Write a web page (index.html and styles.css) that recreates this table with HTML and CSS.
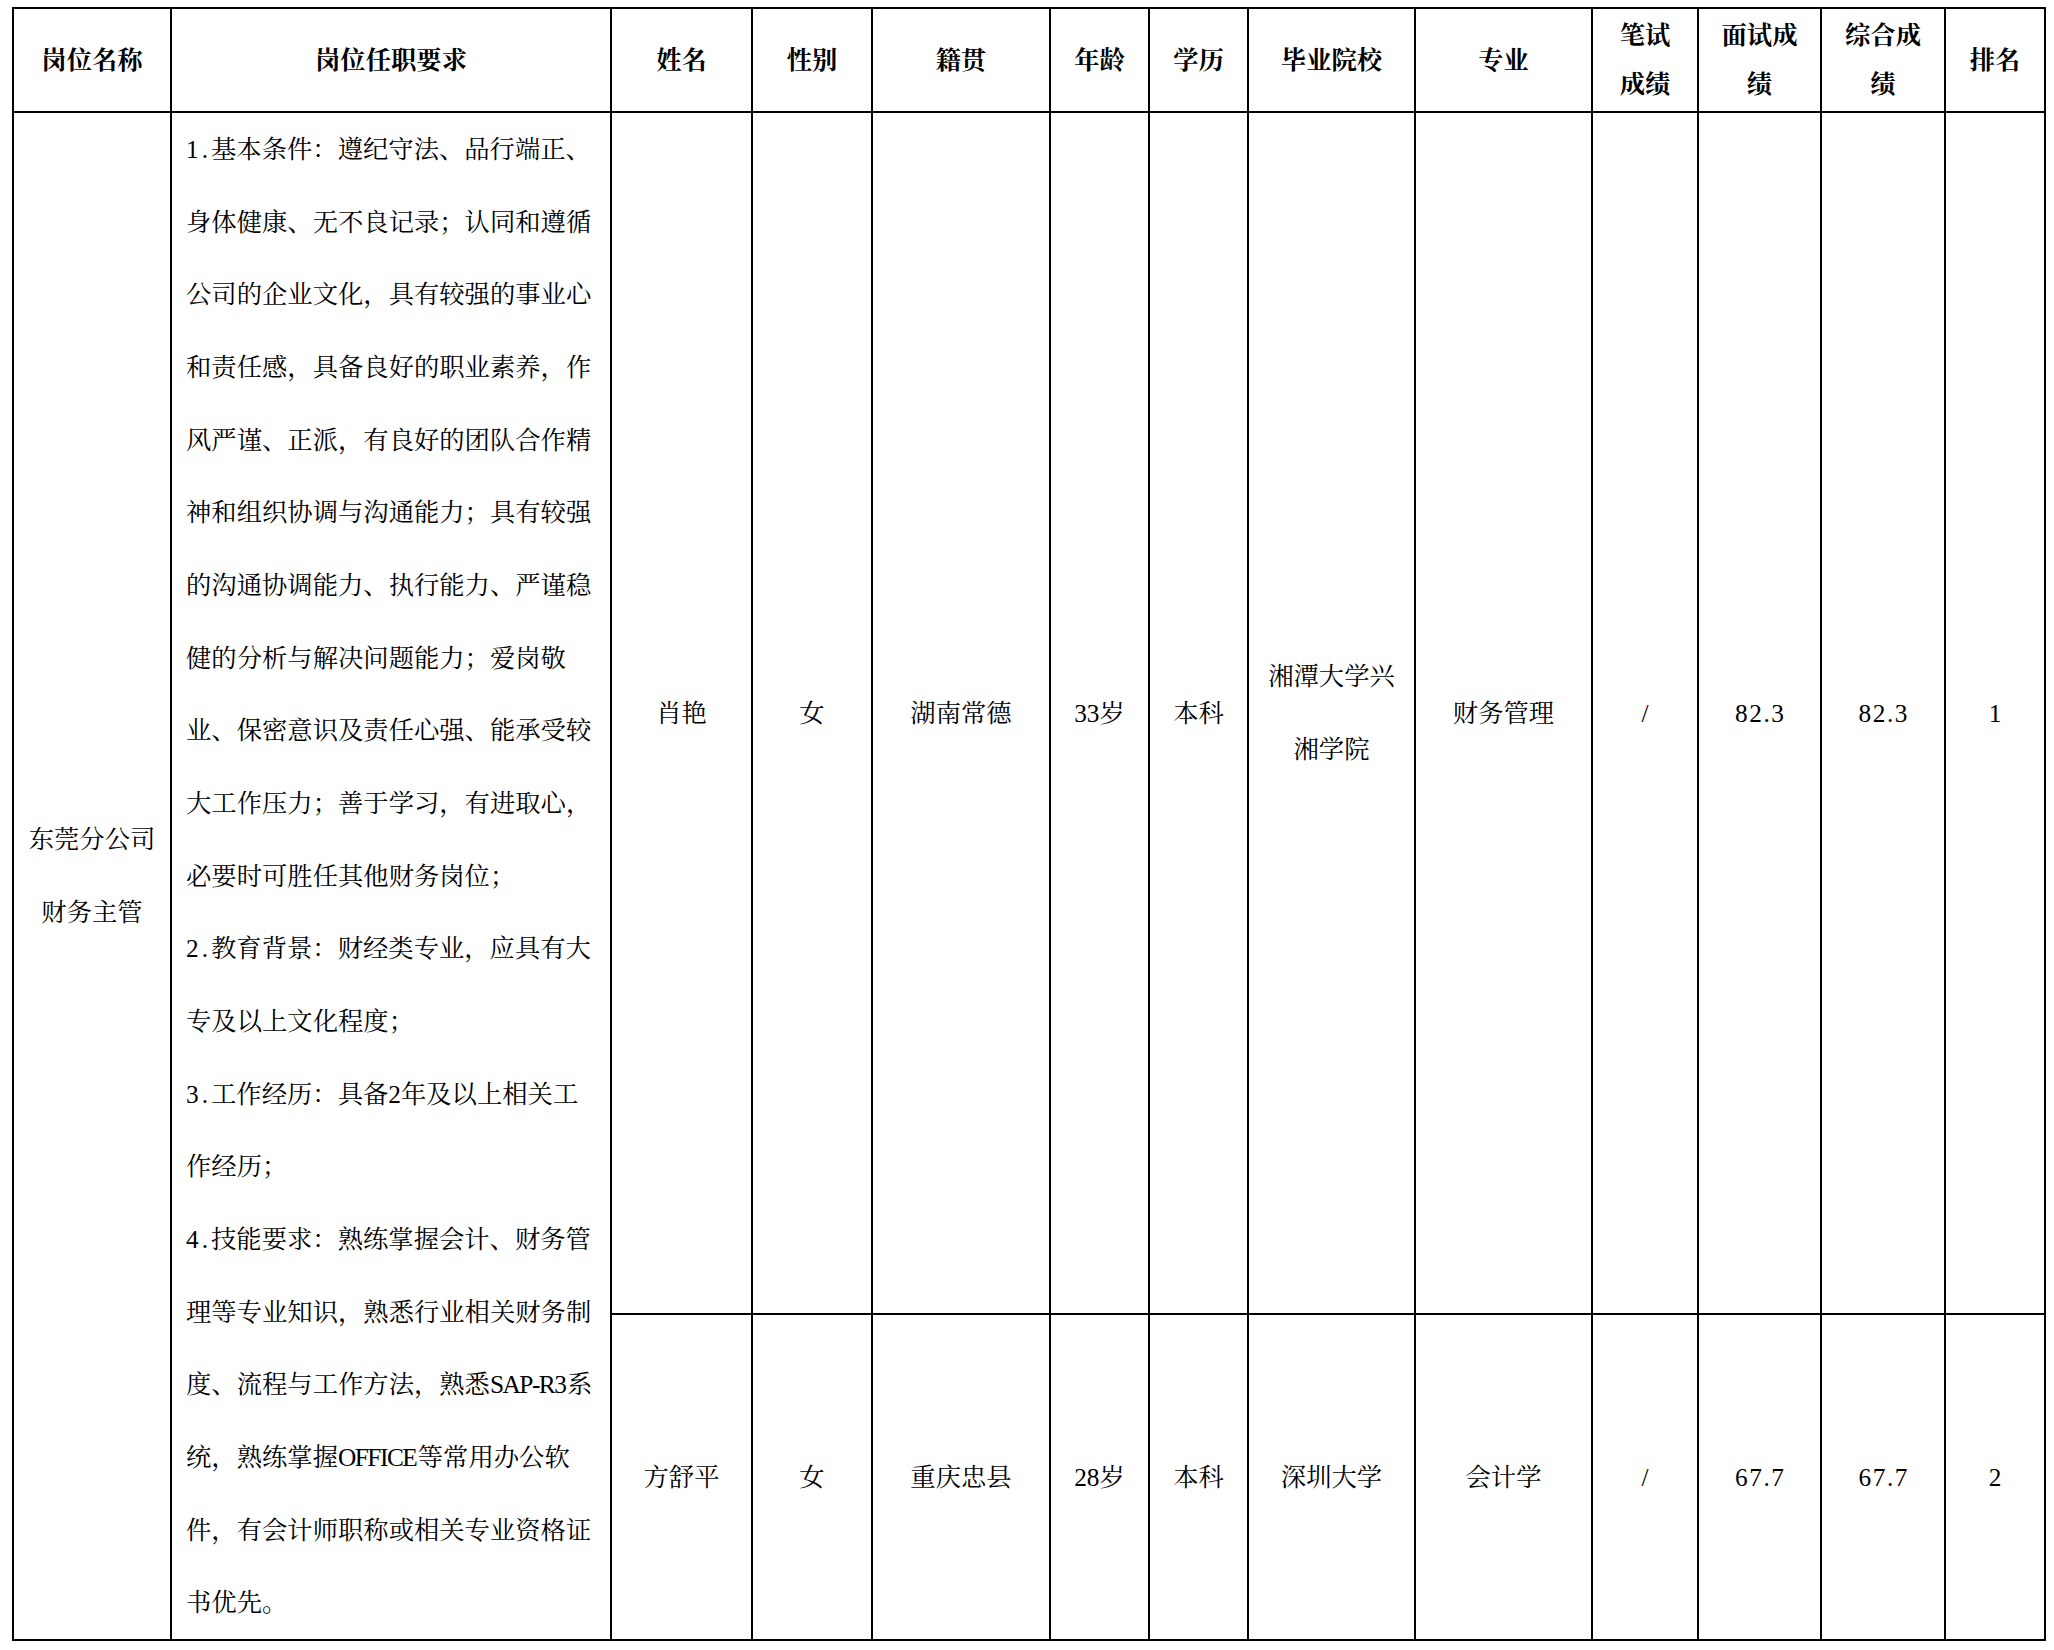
FILE: index.html
```html
<!DOCTYPE html>
<html lang="zh-CN">
<head>
<meta charset="utf-8">
<title>岗位任职要求</title>
<link rel="stylesheet" href="styles.css">
</head>
<body>
<div class="sheet">
  <div class="cell head">岗位名称</div>
  <div class="cell head">岗位任职要求</div>
  <div class="cell head">姓名</div>
  <div class="cell head">性别</div>
  <div class="cell head">籍贯</div>
  <div class="cell head">年龄</div>
  <div class="cell head">学历</div>
  <div class="cell head">毕业院校</div>
  <div class="cell head">专业</div>
  <div class="cell head">笔试<br>成绩</div>
  <div class="cell head">面试成<br>绩</div>
  <div class="cell head">综合成<br>绩</div>
  <div class="cell head">排名</div>

  <div class="cell span2 body">东莞分公司<br>财务主管</div>
  <div class="cell span2 body req"><span class="lead">1.</span>基本条件：遵纪守法、品行端正、<br>身体健康、无不良记录；认同和遵循<br>公司的企业文化，具有较强的事业心<br>和责任感，具备良好的职业素养，作<br>风严谨、正派，有良好的团队合作精<br>神和组织协调与沟通能力；具有较强<br>的沟通协调能力、执行能力、严谨稳<br>健的分析与解决问题能力；爱岗敬<br>业、保密意识及责任心强、能承受较<br>大工作压力；善于学习，有进取心，<br>必要时可胜任其他财务岗位；<br><span class="lead">2.</span>教育背景：财经类专业，应具有大<br>专及以上文化程度；<br><span class="lead">3.</span>工作经历：具备2年及以上相关工<br>作经历；<br><span class="lead">4.</span>技能要求：熟练掌握会计、财务管<br>理等专业知识，熟悉行业相关财务制<br>度、流程与工作方法，熟悉<span class="lat">SAP-R3</span>系<br>统，熟练掌握<span class="lat">OFFICE</span>等常用办公软<br>件，有会计师职称或相关专业资格证<br>书优先。</div>
  <div class="cell body">肖艳</div>
  <div class="cell body">女</div>
  <div class="cell body">湖南常德</div>
  <div class="cell body">33岁</div>
  <div class="cell body">本科</div>
  <div class="cell body">湘潭大学兴<br>湘学院</div>
  <div class="cell body">财务管理</div>
  <div class="cell body">/</div>
  <div class="cell body num">82.3</div>
  <div class="cell body num">82.3</div>
  <div class="cell body">1</div>

  <div class="cell body">方舒平</div>
  <div class="cell body">女</div>
  <div class="cell body">重庆忠县</div>
  <div class="cell body">28岁</div>
  <div class="cell body">本科</div>
  <div class="cell body">深圳大学</div>
  <div class="cell body">会计学</div>
  <div class="cell body">/</div>
  <div class="cell body num">67.7</div>
  <div class="cell body num">67.7</div>
  <div class="cell body">2</div>
</div>
</body>
</html>
```

FILE: styles.css
```css
html, body {
  margin: 0;
  padding: 0;
  background: #ffffff;
}

body {
  font-family: "Liberation Serif", "Noto Serif CJK SC", "Noto Sans CJK SC", serif;
  font-size: 25.33px;
  color: #000000;
}

.sheet {
  display: grid;
  grid-template-columns: 156px 438px 139px 118px 176px 97px 97px 165px 175px 104px 121px 122px 98px;
  grid-template-rows: 102px 1200px 324px;
  gap: 2px;
  padding: 2px;
  background: #000000;
  width: max-content;
  margin: 7px 0 0 12px;
}

.cell {
  background: #ffffff;
  display: flex;
  align-items: center;
  justify-content: center;
  text-align: center;
  white-space: nowrap;
}

.head {
  font-weight: 700;
  line-height: 49px;
}

.body {
  font-weight: 400;
  line-height: 73px;
}

.num {
  letter-spacing: 1.5px;
  padding-left: 1.5px;
}

.span2 {
  grid-row: 2 / span 2;
}

.req {
  display: block;
  text-align: left;
  line-height: 72.67px;
  padding-left: 14px;
}

.lead {
  letter-spacing: 3px;
}

.lat {
  letter-spacing: -1.5px;
  margin-right: 1.5px;
}
```
